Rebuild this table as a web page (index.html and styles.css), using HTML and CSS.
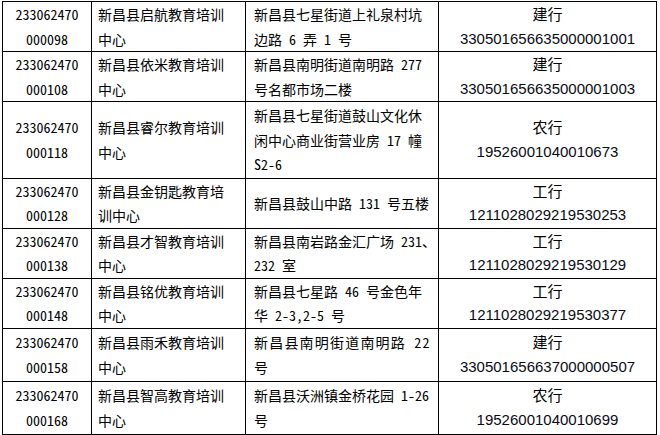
FILE: index.html
```html
<!DOCTYPE html>
<html lang="zh-CN">
<head>
<meta charset="utf-8">
<title>培训机构名单</title>
<link rel="stylesheet" href="styles.css">
</head>
<body>
<table class="list">
  <colgroup>
    <col class="c-code">
    <col class="c-name">
    <col class="c-addr">
    <col class="c-bank">
  </colgroup>
  <tbody>
    <tr>
      <td class="code">233062470<br>000098</td>
      <td class="name">新昌县启航教育培训<br>中心</td>
      <td class="addr">新昌县七星街道上礼泉村坑<br>边路 6 弄 1 号</td>
      <td class="bank">建行<span class="acct">330501656635000001001</span></td>
    </tr>
    <tr>
      <td class="code">233062470<br>000108</td>
      <td class="name">新昌县依米教育培训<br>中心</td>
      <td class="addr">新昌县南明街道南明路 277<br>号名都市场二楼</td>
      <td class="bank">建行<span class="acct">330501656635000001003</span></td>
    </tr>
    <tr class="r-tall">
      <td class="code">233062470<br>000118</td>
      <td class="name">新昌县睿尔教育培训<br>中心</td>
      <td class="addr">新昌县七星街道鼓山文化休<br>闲中心商业街营业房 17 幢<br>S2-6</td>
      <td class="bank">农行<span class="acct">19526001040010673</span></td>
    </tr>
    <tr>
      <td class="code">233062470<br>000128</td>
      <td class="name">新昌县金钥匙教育培<br>训中心</td>
      <td class="addr">新昌县鼓山中路 131 号五楼</td>
      <td class="bank">工行<span class="acct">1211028029219530253</span></td>
    </tr>
    <tr>
      <td class="code">233062470<br>000138</td>
      <td class="name">新昌县才智教育培训<br>中心</td>
      <td class="addr">新昌县南岩路金汇广场 231、<br>232 室</td>
      <td class="bank">工行<span class="acct">1211028029219530129</span></td>
    </tr>
    <tr>
      <td class="code">233062470<br>000148</td>
      <td class="name">新昌县铭优教育培训<br>中心</td>
      <td class="addr">新昌县七星路 46 号金色年<br>华 2-3,2-5 号</td>
      <td class="bank">工行<span class="acct">1211028029219530377</span></td>
    </tr>
    <tr class="r-wide">
      <td class="code">233062470<br>000158</td>
      <td class="name">新昌县雨禾教育培训<br>中心</td>
      <td class="addr spaced">新昌县南明街道南明路 22<br>号</td>
      <td class="bank">建行<span class="acct">330501656637000000507</span></td>
    </tr>
    <tr class="r-wide">
      <td class="code">233062470<br>000168</td>
      <td class="name">新昌县智高教育培训<br>中心</td>
      <td class="addr">新昌县沃洲镇金桥花园 1-26<br>号</td>
      <td class="bank">农行<span class="acct">19526001040010699</span></td>
    </tr>
  </tbody>
</table>
</body>
</html>
```

FILE: styles.css
```css
html, body {
  margin: 0;
  padding: 0;
  background: #ffffff;
}

body {
  padding: 1px 0 0 2px;
  font-family: "Noto Sans Mono CJK SC", "Noto Sans CJK SC", sans-serif;
  font-size: 14px;
  color: #000000;
}

.list {
  border-collapse: collapse;
  table-layout: fixed;
  width: 655px;
}

.c-code { width: 89px; }
.c-name { width: 154px; }
.c-addr { width: 193px; }
.c-bank { width: 218px; }

.list td {
  border: 1px solid #000000;
  padding: 0 6px;
  line-height: 24.5px;
  vertical-align: middle;
  white-space: nowrap;
  overflow: hidden;
}

.list .r-tall td {
  padding-top: 1px;
  padding-bottom: 1px;
}

.list .r-wide td {
  padding-top: 1.5px;
  padding-bottom: 1.5px;
}

.code {
  text-align: center;
}

.name {
  text-align: left;
}

.list .addr {
  text-align: left;
  padding-left: 8px;
}

.addr.spaced {
  letter-spacing: 1.2px;
}

.bank {
  text-align: center;
  font-size: 15px;
}

.acct {
  display: block;
  font-family: "Liberation Sans", Arial, sans-serif;
  font-size: 15px;
  line-height: 24.5px;
  color: #0a0a14;
}
```
